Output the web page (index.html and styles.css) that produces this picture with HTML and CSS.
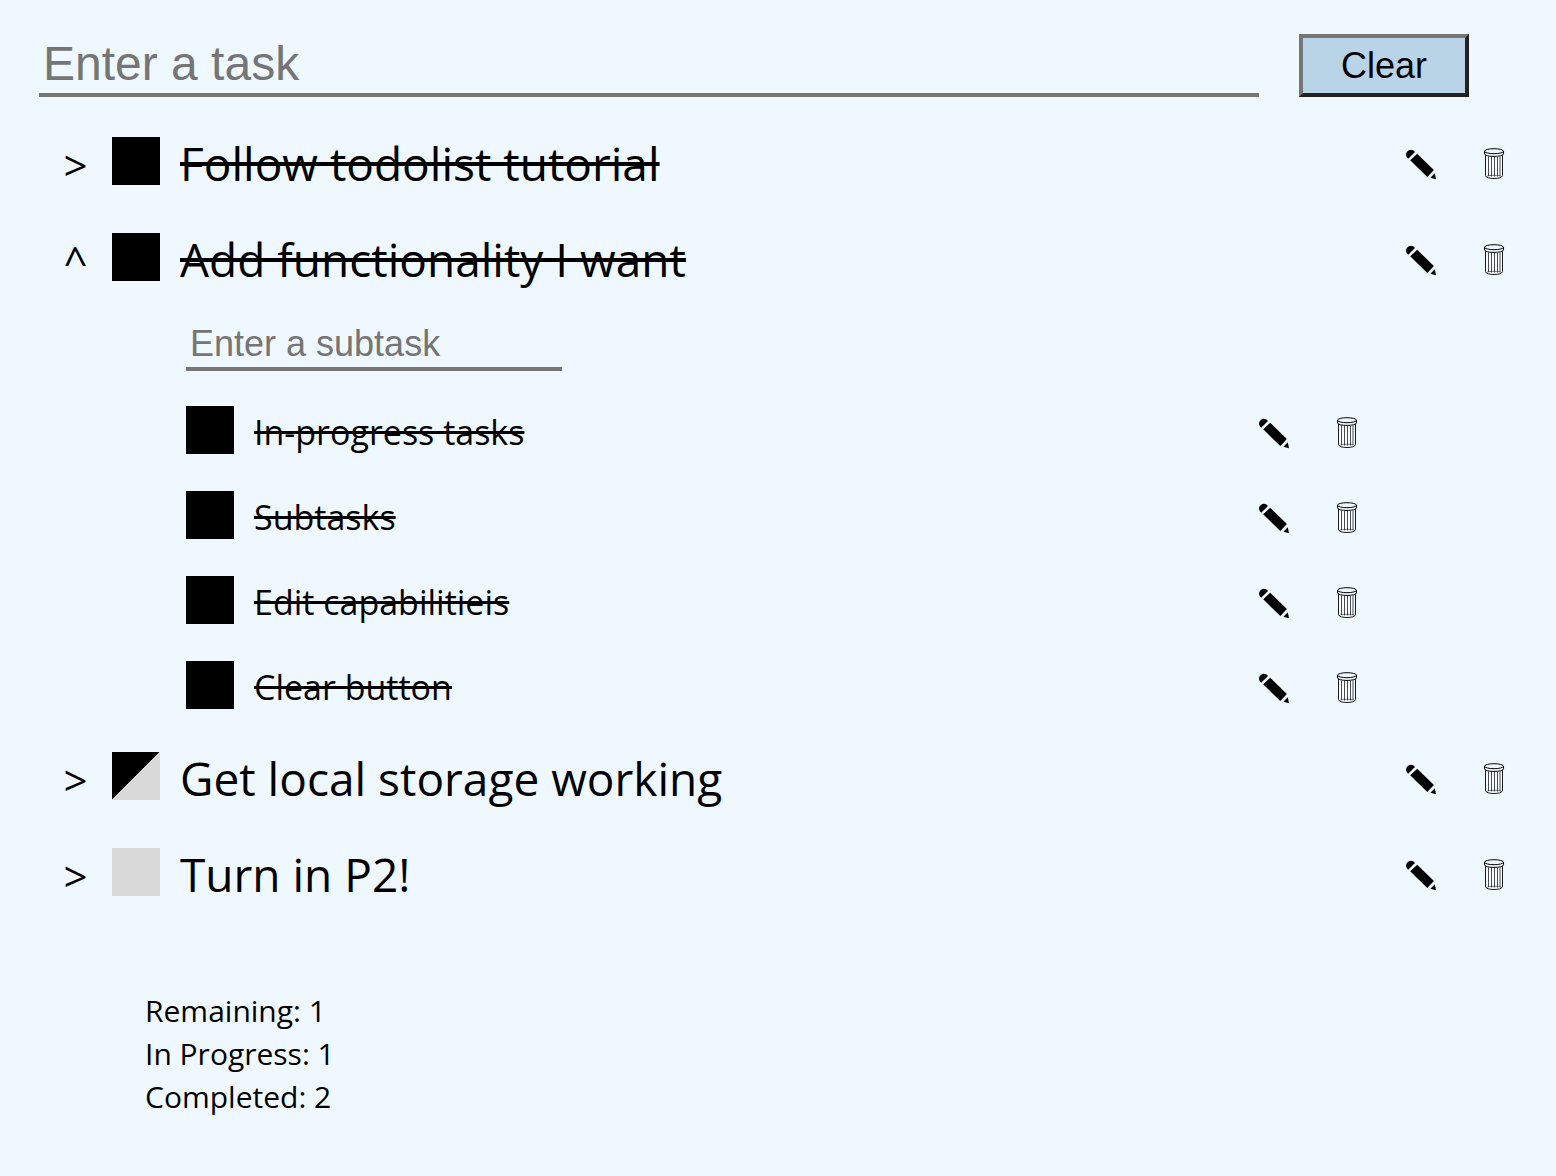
FILE: index.html
```html
<!DOCTYPE html>
<html lang="en">
<head>
<meta charset="utf-8">
<meta name="viewport" content="width=device-width, initial-scale=1">
<title>Todo list</title>
<link rel="stylesheet" href="styles.css">
</head>
<body>
<svg class="sprite" aria-hidden="true">
  <symbol id="pencil" viewBox="0 0 32 32">
    <path d="M3.200 10.700 C.5 8.200 .4 5.200 2.600 3.200 C4.800 1.200 7.800 1.400 10 4 Z"/>
    <path d="M12.200 5.700 L28.900 22 L22.300 29 L5.200 12.300 Z"/>
    <path d="M29.800 25.200 L31 31.200 L25.300 29.700 Z"/>
  </symbol>
  <symbol id="trash" viewBox="0 0 32 32">
    <g fill="none" stroke="currentColor">
      <path fill="#fff" fill-opacity=".5" stroke-width=".9" d="M7.500 6.500 V27.500 C7.500 31.500 24.500 31.500 24.500 27.500 V6.500"/>
      <path stroke-width=".7" d="M10.500 8.500 V28 M13.500 9 V28.500 M16.500 9 V28.500 M19.500 9 V28.500 M22 8.500 V28"/>
      <path fill="#f0f8ff" stroke-width="1" d="M6.500 3 V5.800 C6.500 9.300 25.500 9.300 25.500 5.800 V3"/>
      <ellipse fill="#f0f8ff" stroke-width="1" cx="16" cy="3.200" rx="9.500" ry="2.500"/>
      <path stroke-width=".5" d="M9 28.300 C11 27 21 27 23 28.300"/>
    </g>
  </symbol>
</svg>

<main>
  <form class="entry">
    <input class="field task-field" type="text" placeholder="Enter a task" aria-label="Enter a task">
    <button class="clear" type="button">Clear</button>
  </form>

  <ul class="list">
    <li>
      <div class="row">
        <button class="toggle" type="button" aria-label="Show subtasks">&gt;</button>
        <input class="box" type="checkbox" id="t1" checked>
        <label class="name" for="t1">Follow todolist tutorial</label>
        <button class="action" type="button" aria-label="Edit"><svg><use href="#pencil"/></svg></button>
        <button class="action" type="button" aria-label="Delete"><svg><use href="#trash"/></svg></button>
      </div>
    </li>
    <li>
      <div class="row">
        <button class="toggle" type="button" aria-label="Hide subtasks">^</button>
        <input class="box" type="checkbox" id="t2" checked>
        <label class="name" for="t2">Add functionality I want</label>
        <button class="action" type="button" aria-label="Edit"><svg><use href="#pencil"/></svg></button>
        <button class="action" type="button" aria-label="Delete"><svg><use href="#trash"/></svg></button>
      </div>
      <div class="subtasks">
        <input class="field subtask-field" type="text" placeholder="Enter a subtask" aria-label="Enter a subtask">
        <ul class="list">
          <li class="row">
            <input class="box" type="checkbox" id="s1" checked>
            <label class="name" for="s1">In-progress tasks</label>
            <button class="action" type="button" aria-label="Edit"><svg><use href="#pencil"/></svg></button>
            <button class="action" type="button" aria-label="Delete"><svg><use href="#trash"/></svg></button>
          </li>
          <li class="row">
            <input class="box" type="checkbox" id="s2" checked>
            <label class="name" for="s2">Subtasks</label>
            <button class="action" type="button" aria-label="Edit"><svg><use href="#pencil"/></svg></button>
            <button class="action" type="button" aria-label="Delete"><svg><use href="#trash"/></svg></button>
          </li>
          <li class="row">
            <input class="box" type="checkbox" id="s3" checked>
            <label class="name" for="s3">Edit capabilitieis</label>
            <button class="action" type="button" aria-label="Edit"><svg><use href="#pencil"/></svg></button>
            <button class="action" type="button" aria-label="Delete"><svg><use href="#trash"/></svg></button>
          </li>
          <li class="row">
            <input class="box" type="checkbox" id="s4" checked>
            <label class="name" for="s4">Clear button</label>
            <button class="action" type="button" aria-label="Edit"><svg><use href="#pencil"/></svg></button>
            <button class="action" type="button" aria-label="Delete"><svg><use href="#trash"/></svg></button>
          </li>
        </ul>
      </div>
    </li>
    <li>
      <div class="row">
        <button class="toggle" type="button" aria-label="Show subtasks">&gt;</button>
        <input class="box in-progress" type="checkbox" id="t3">
        <label class="name" for="t3">Get local storage working</label>
        <button class="action" type="button" aria-label="Edit"><svg><use href="#pencil"/></svg></button>
        <button class="action" type="button" aria-label="Delete"><svg><use href="#trash"/></svg></button>
      </div>
    </li>
    <li>
      <div class="row">
        <button class="toggle" type="button" aria-label="Show subtasks">&gt;</button>
        <input class="box" type="checkbox" id="t4">
        <label class="name" for="t4">Turn in P2!</label>
        <button class="action" type="button" aria-label="Edit"><svg><use href="#pencil"/></svg></button>
        <button class="action" type="button" aria-label="Delete"><svg><use href="#trash"/></svg></button>
      </div>
    </li>
  </ul>

  <div class="stats">
    <p>Remaining: 1</p>
    <p>In Progress: 1</p>
    <p>Completed: 2</p>
  </div>
</main>
</body>
</html>
```
FILE: styles.css
```css
* {
  box-sizing: border-box;
}

body {
  margin: 0;
  background: #f0f8ff;
  color: #000;
  font-family: "Segoe UI", "Open Sans", sans-serif;
}

.sprite {
  display: none;
}

main {
  padding: 34px 26px 58px 39px;
}

.entry {
  display: flex;
  gap: 40px;
  margin: 0 61px 16px 0;
}

.field {
  border: 0;
  border-bottom: 4px solid #767676;
  padding: 0 4px;
  background: transparent;
  font-family: Arial, "Liberation Sans", sans-serif;
  outline: none;
}

.field::placeholder {
  color: #757575;
  opacity: 1;
}

.task-field {
  flex: 1;
  min-width: 0;
  height: 63px;
  font-size: 48px;
}

.clear {
  width: 170px;
  border: 4px solid;
  border-color: #767676 #212121 #212121 #767676;
  background: #bad4e7;
  color: #000;
  font: 36px Arial, "Liberation Sans", sans-serif;
}

.list {
  margin: 0;
  padding: 0;
  list-style: none;
}

.row {
  display: flex;
  align-items: center;
  min-height: 96px;
  font-size: 46px;
}

.toggle {
  width: 73px;
  border: 0;
  padding: 8px 0 0;
  background: none;
  color: inherit;
  font: 42px/48px "Segoe UI", "Open Sans", sans-serif;
}

.box {
  appearance: none;
  flex: none;
  width: 48px;
  height: 48px;
  margin: 0 20px 0 0;
  background: #d9d9d9;
}

.box:checked {
  background: #000;
}

.box.in-progress {
  background: linear-gradient(135deg, #000 50%, #d9d9d9 50%);
}

.name {
  flex: 1;
  padding-top: 4px;
  line-height: 64px;
}

.box:checked + .name {
  text-decoration: line-through;
}

.action {
  flex: none;
  width: 73px;
  border: 0;
  padding: 6px 0 0;
  background: none;
  color: #000;
}

.action svg {
  display: block;
  width: 32px;
  height: 32px;
  margin: 0 auto;
}

.subtasks {
  padding: 14px 147px 1px;
}

.subtask-field {
  display: block;
  width: 376px;
  max-width: 100%;
  height: 52px;
  margin-bottom: 16px;
  padding-top: 2px;
  font-size: 36px;
}

.subtasks .row {
  min-height: 85px;
  font-size: 34px;
}

.stats {
  padding: 69px 106px 0;
  font-size: 30px;
  line-height: 43px;
}

.stats p {
  margin: 0;
}
```
